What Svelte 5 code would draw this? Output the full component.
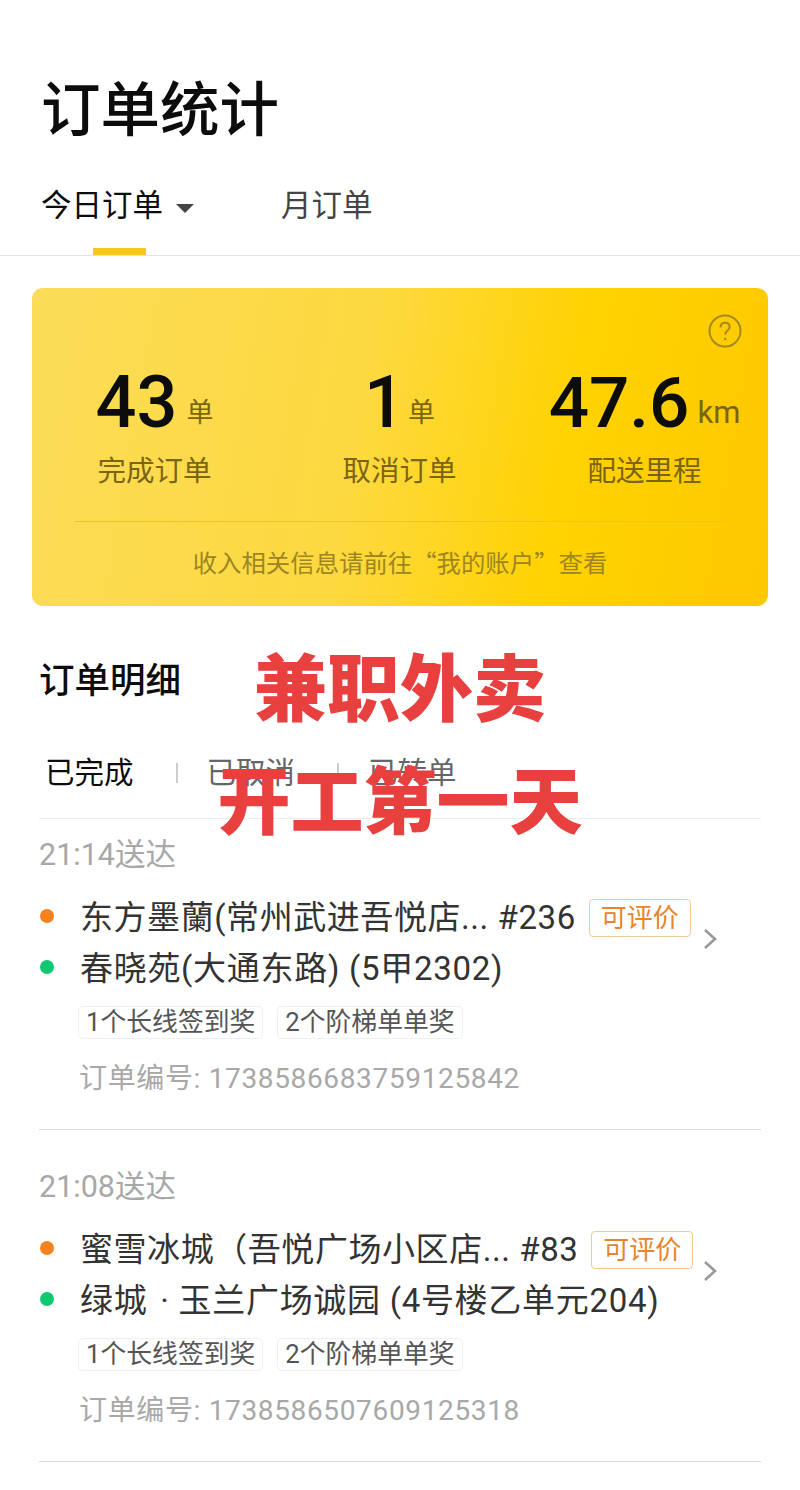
<script>
  const stats = [
    { value: '43', unit: '单', label: '完成订单' },
    { value: '1', unit: '单', label: '取消订单' },
    { value: '47.6', unit: 'km', label: '配送里程' }
  ];
  const orders = [
    {
      time: '21:14送达',
      shop: '东方墨蘭(常州武进吾悦店... #236',
      addr: '春晓苑(大通东路) (5甲2302)',
      no: '1738586683759125842'
    },
    {
      time: '21:08送达',
      shop: '蜜雪冰城（吾悦广场小区店... #83',
      addr: '绿城\u200a · 玉兰广场诚园 (4号楼乙单元204)',
      no: '1738586507609125318'
    }
  ];
</script>

<div class="page">
  <h1>订单统计</h1>
  <div class="tabs">
    <div class="tab active">今日订单<span class="caret"></span></div>
    <div class="tab">月订单</div>
  </div>

  <section class="card">
    <div class="help">
      <svg width="34" height="34" viewBox="0 0 34 34" fill="none" stroke="#a68a1c" stroke-width="2">
        <circle cx="17" cy="17" r="15.5"/>
        <path d="M12.5 13.5c0-3 2-4.8 4.6-4.8s4.5 1.7 4.5 4.2c0 3.6-4.4 3.8-4.4 7.6"/>
        <circle cx="17.2" cy="25" r="1.2" fill="#a68a1c" stroke="none"/>
      </svg>
    </div>
    <div class="stats">
      {#each stats as s}
        <div class="stat">
          <div class="num"><b>{s.value}</b><span>{s.unit}</span></div>
          <div class="label">{s.label}</div>
        </div>
      {/each}
    </div>
    <div class="note">收入相关信息请前往“我的账户”查看</div>
  </section>

  <h2>订单明细</h2>
  <div class="sub">
    <span class="on">已完成</span>
    <i></i>
    <span>已取消</span>
    <i></i>
    <span>已转单</span>
  </div>

  <div class="list">
    {#each orders as o}
      <article class="order">
        <div class="time">{o.time}</div>
        <div class="row first">
          <span class="dot orange"></span>
          <span class="txt">{o.shop}</span>
          <span class="tag">可评价</span>
        </div>
        <div class="row second">
          <span class="dot green"></span>
          <span class="txt">{o.addr}</span>
        </div>
        <div class="chips">
          <span>1个长线签到奖</span>
          <span>2个阶梯单单奖</span>
        </div>
        <div class="no">订单编号: {o.no}</div>
        <svg class="chev" width="14" height="22" viewBox="0 0 14 22" fill="none" stroke="#999" stroke-width="2.6">
          <path d="M2 2l10 9-10 9"/>
        </svg>
      </article>
    {/each}
  </div>

  <div class="stamp">
    <div class="l1">兼职外卖</div>
    <div class="l2">开工第一天</div>
  </div>
</div>

<style>
  :global(body) { margin: 0; background: #fff; }

  .page {
    position: relative;
    width: 800px;
    height: 1490px;
    overflow: hidden;
    background: #fff;
    font-family: Roboto, "Noto Sans CJK SC", sans-serif;
    color: #0c0c0c;
  }

  h1 {
    margin: 0;
    padding: 75px 0 0 41px;
    font-size: 59.5px;
    line-height: 72px;
    font-weight: 500;
  }

  .tabs {
    display: flex;
    height: 109px;
    padding-left: 41px;
    box-sizing: border-box;
    border-bottom: 1px solid #e4e4e4;
  }
  .tab {
    font-size: 30.5px;
    line-height: 40px;
    margin-top: 39px;
    color: #444;
    margin-left: 118px;
  }
  .tab.active { position: relative; margin-left: 0; color: #0c0c0c; height: 69px; width: 122px; white-space: nowrap; }
  .tab.active::after {
    content: '';
    position: absolute;
    left: 52px; bottom: 0;
    width: 53px; height: 7px;
    background: #f7c815;
  }
  .caret {
    display: inline-block;
    margin-left: 13px;
    vertical-align: 3px;
    border: 9px solid transparent;
    border-top: 9px solid #444;
    border-bottom: 0;
  }

  .card {
    margin: 32px 32px 0;
    height: 318px;
    position: relative;
    border-radius: 11px;
    background: linear-gradient(100deg, #fbdc58 0%, #fdd93f 45%, #ffd200 72%, #fdc800 100%);
  }
  .help { position: absolute; right: 26px; top: 26px; line-height: 0; }

  .stats {
    display: grid;
    grid-template-columns: repeat(3, 245px);
    padding-top: 73px;
    height: 160px;
  }
  .stat { text-align: center; white-space: nowrap; }
  .num { display: flex; justify-content: center; align-items: baseline; height: 84px; line-height: 84px; }
  .num b { font-size: 72px; font-weight: 500; color: #0c0c0c; }
  .num span { font-size: 27px; margin-left: 9px; color: #7b6414; position: relative; top: -5px; }
  .stat:nth-child(2) .num span { margin-left: 3px; }
  .stat:last-child .num b { font-size: 71px; }
  .stat:last-child .num span { font-size: 31px; margin-left: 8px; top: -4px; }
  .label { font-size: 28.5px; line-height: 40px; color: #7b6414; margin-top: 7px; }

  .note {
    margin: 0 43px;
    padding-top: 22px;
    border-top: 1px solid #eec520;
    text-align: center;
    font-family: "Noto Sans CJK SC", sans-serif;
    font-size: 24.4px;
    line-height: 36px;
    color: #9e8522;
  }

  h2 {
    margin: 0;
    padding: 51px 0 0 39px;
    font-size: 35.5px;
    line-height: 48px;
    font-weight: 500;
  }

  .sub {
    display: flex;
    align-items: center;
    margin-top: 48px;
    padding-left: 45px;
    font-size: 29.5px;
    line-height: 40px;
    color: #666;
  }
  .sub .on { color: #0c0c0c; }
  .sub i { width: 2px; height: 20px; background: #ccc; margin: 0 29px 0 42px; }

  .list { margin: 25px 39px 0; border-top: 1px solid #ececec; }
  .order {
    position: relative;
    height: 332px;
    box-sizing: border-box;
    padding-top: 37px;
    border-bottom: 1px solid #dcdcdc;
  }
  .order:first-child { height: 311px; padding-top: 16px; }

  .time {
    font-size: 30.5px;
    line-height: 40px;
    color: #a8a8a8;
  }

  .row {
    display: flex;
    align-items: center;
    height: 40px;
    white-space: nowrap;
  }
  .row.first { margin-top: 23px; }
  .row.second { margin-top: 11px; }
  .dot { width: 14px; height: 14px; border-radius: 50%; margin: 0 27px 0 1px; flex: none; position: relative; top: -2px; }
  .orange { background: #f5821f; }
  .green { background: #0fc872; }
  .txt { font-size: 33px; line-height: 40px; color: #333; letter-spacing: 0.7px; margin-left: -1px; }
  .row.first .txt { letter-spacing: 0.56px; }
  .tag {
    margin-left: 13px;
    height: 38px;
    width: 102px;
    box-sizing: border-box;
    border: 1px solid #f2c998;
    border-radius: 4px;
    text-align: center;
    font-size: 26px;
    line-height: 36px;
    color: #e8842b;
  }

  .chips {
    display: flex;
    gap: 14px;
    margin: 17px 0 0 39px;
  }
  .chips span {
    padding: 0 7px;
    height: 33px;
    border: 1px solid #f0f0f0;
    border-radius: 5px;
    box-sizing: border-box;
    font-size: 25.8px;
    line-height: 31px;
    color: #555;
    white-space: nowrap;
  }

  .no {
    margin: 20px 0 0 40px;
    font-size: 28px;
    line-height: 40px;
    color: #a8a8a8;
    letter-spacing: 0.65px;
  }

  .chev { position: absolute; right: 44px; top: 130px; }
  .order:first-child .chev { top: 109px; }

  .stamp {
    position: absolute;
    left: 0; right: 0; top: 645px;
    text-align: center;
    font-size: 73px;
    font-weight: 900;
    color: #e8403f;
    line-height: 90px;
  }
  .stamp .l2 { margin-top: 23px; }
</style>
